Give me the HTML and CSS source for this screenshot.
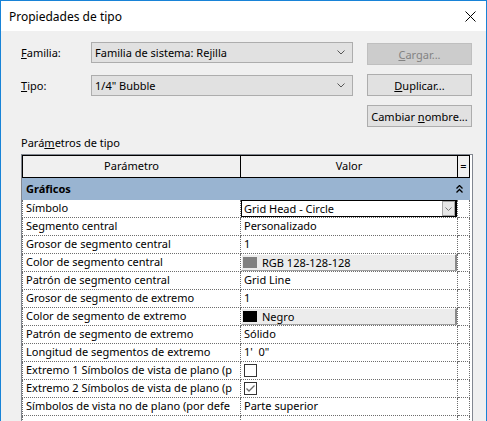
FILE: index.html
```html
<!DOCTYPE html>
<html lang="es">
<head>
  <meta charset="UTF-8" />
  <title>Propiedades de tipo</title>
  <link rel="stylesheet" href="styles.css">
</head>
<body>
  <div class="window">
    <div class="titlebar">
      <span>Propiedades de tipo</span>
      <svg class="close" width="11" height="11" viewBox="0 0 11 11">
        <path d="M0.5 0.5 L10.5 10.5 M10.5 0.5 L0.5 10.5" stroke="#000" stroke-width="1" fill="none"/>
      </svg>
    </div>

    <div class="content">
      <div class="top">
        <div class="fields">
          <div class="field">
            <label><u>F</u>amilia:</label>
            <div class="combo">
              <span>Familia de sistema: Rejilla</span>
              <svg width="8" height="5" viewBox="0 0 8 5"><path d="M0.5 0.5 L4 4 L7.5 0.5" stroke="#555" fill="none"/></svg>
            </div>
          </div>
          <div class="field">
            <label><u>T</u>ipo:</label>
            <div class="combo">
              <span>1/4" Bubble</span>
              <svg width="8" height="5" viewBox="0 0 8 5"><path d="M0.5 0.5 L4 4 L7.5 0.5" stroke="#555" fill="none"/></svg>
            </div>
          </div>
        </div>
        <div class="buttons">
          <button class="btn disabled"><u>C</u>argar...</button>
          <button class="btn"><u>D</u>uplicar...</button>
          <button class="btn">Cambiar <u>n</u>ombre...</button>
        </div>
      </div>

      <div class="section-label">Pará<u>m</u>etros de tipo</div>

      <div class="grid">
        <div class="row head">
          <div class="cell">Parámetro</div>
          <div class="cell">Valor</div>
          <div class="cell">=</div>
        </div>
        <div class="group">
          <span>Gráficos</span>
          <svg width="7" height="8" viewBox="0 0 7 8"><path d="M0.5 3.5 L3.5 0.5 L6.5 3.5 M0.5 7.5 L3.5 4.5 L6.5 7.5" stroke="#000" stroke-width="1.3" fill="none"/></svg>
        </div>

        <div class="row">
          <div class="cell">Símbolo</div>
          <div class="cell editor-cell">
            <div class="editor">
              <span>Grid Head - Circle</span>
              <div class="drop"><svg width="7" height="4" viewBox="0 0 7 4"><path d="M0.5 0.5 L3.5 3.5 L6.5 0.5" stroke="#777" fill="none"/></svg></div>
            </div>
          </div>
          <div class="cell"></div>
        </div>
        <div class="row">
          <div class="cell">Segmento central</div>
          <div class="cell">Personalizado</div>
          <div class="cell"></div>
        </div>
        <div class="row">
          <div class="cell">Grosor de segmento central</div>
          <div class="cell">1</div>
          <div class="cell"></div>
        </div>
        <div class="row">
          <div class="cell">Color de segmento central</div>
          <div class="cell editor-cell">
            <div class="color-btn"><span class="swatch gray"></span>RGB 128-128-128</div>
          </div>
          <div class="cell"></div>
        </div>
        <div class="row">
          <div class="cell">Patrón de segmento central</div>
          <div class="cell">Grid Line</div>
          <div class="cell"></div>
        </div>
        <div class="row">
          <div class="cell">Grosor de segmento de extremo</div>
          <div class="cell">1</div>
          <div class="cell"></div>
        </div>
        <div class="row">
          <div class="cell">Color de segmento de extremo</div>
          <div class="cell editor-cell">
            <div class="color-btn"><span class="swatch black"></span>Negro</div>
          </div>
          <div class="cell"></div>
        </div>
        <div class="row">
          <div class="cell">Patrón de segmento de extremo</div>
          <div class="cell">Sólido</div>
          <div class="cell"></div>
        </div>
        <div class="row">
          <div class="cell">Longitud de segmentos de extremo</div>
          <div class="cell">1'&nbsp; 0"</div>
          <div class="cell"></div>
        </div>
        <div class="row">
          <div class="cell">Extremo 1 Símbolos de vista de plano (p</div>
          <div class="cell"><span class="check"></span></div>
          <div class="cell"></div>
        </div>
        <div class="row">
          <div class="cell">Extremo 2 Símbolos de vista de plano (p</div>
          <div class="cell">
            <span class="check">
              <svg width="11" height="11" viewBox="0 0 11 11"><path d="M1.5 5.5 L4 8 L9.5 2.5" stroke="#6b6b6b" stroke-width="1.3" fill="none"/></svg>
            </span>
          </div>
          <div class="cell"></div>
        </div>
        <div class="row">
          <div class="cell">Símbolos de vista no de plano (por defe</div>
          <div class="cell">Parte superior</div>
          <div class="cell"></div>
        </div>
        <div class="row">
          <div class="cell"></div>
          <div class="cell"></div>
          <div class="cell"></div>
        </div>
      </div>
    </div>
  </div>
</body>
</html>
```

FILE: styles.css
```css
body {
  margin: 0;
  padding: 0;
  overflow: hidden;
  font-family: "Noto Sans", "Liberation Sans", sans-serif;
  font-size: 11px;
  color: #000;
  background: #f0f0f0;
}

.window {
  width: 487px;
  height: 421px;
  box-sizing: border-box;
  border: 1px solid #1883d7;
  border-bottom: none;
  background: #f0f0f0;
  display: flex;
  flex-direction: column;
  overflow: hidden;
}

.titlebar {
  height: 30px;
  flex: none;
  background: #fff;
  display: flex;
  align-items: center;
  justify-content: space-between;
  padding: 0 10px 0 8px;
  font-size: 12px;
}

.content {
  flex: 1;
  display: flex;
  flex-direction: column;
  padding: 11px 13px 0 20px;
  min-height: 0;
}

.top {
  display: flex;
  gap: 14px;
}

.fields {
  width: 332px;
  display: flex;
  flex-direction: column;
  gap: 12px;
}

.field {
  display: flex;
  align-items: center;
}

.field label {
  width: 70px;
}

.combo {
  width: 262px;
  height: 21px;
  box-sizing: border-box;
  background: #e1e1e1;
  border: 1px solid #adadad;
  display: flex;
  align-items: center;
  justify-content: space-between;
  padding: 0 7px 0 3px;
}

.buttons {
  width: 105px;
  display: flex;
  flex-direction: column;
  gap: 9px;
  padding-top: 1px;
}

.btn {
  height: 22px;
  font-family: inherit;
  font-size: 11px;
  background: #e1e1e1;
  border: 1px solid #adadad;
  color: #000;
  padding: 0;
}

.btn.disabled {
  background: #cccccc;
  border-color: #bfbfbf;
  color: #838383;
}

.section-label {
  margin: 9px 0 4px 0;
  height: 14px;
  line-height: 14px;
}

.grid {
  flex: 1;
  background: #fff;
  border: 1px solid #828790;
  border-bottom: none;
}

.row {
  display: grid;
  grid-template-columns: 219px 217px 12px;
  height: 18px;
}

.row .cell {
  box-sizing: border-box;
  border-right: 1px dotted #6d6d6d;
  border-bottom: 1px dotted #6d6d6d;
  padding-left: 3px;
  line-height: 16px;
  white-space: nowrap;
  overflow: hidden;
}

.row .cell:first-child {
  border-left: 1px dotted #6d6d6d;
}

.row.head {
  height: 23px;
}

.row.head .cell {
  border: 1px solid #000;
  border-left: none;
  background: #f0f0f0;
  text-align: center;
  line-height: 20px;
  padding: 0;
}

.row.head .cell:first-child {
  border-left: 1px solid #000;
}

.group {
  width: 448px;
  height: 22px;
  box-sizing: border-box;
  background: #99b4d1;
  font-weight: bold;
  display: flex;
  align-items: center;
  justify-content: space-between;
  padding: 0 7px 1px 4px;
}

.row .editor-cell {
  padding: 0;
}

.editor {
  height: 17px;
  box-sizing: border-box;
  border: 1px solid #000;
  border-right-width: 2px;
  display: flex;
  align-items: center;
  justify-content: space-between;
  padding-left: 2px;
  line-height: 14px;
}

.drop {
  width: 13px;
  height: 15px;
  box-sizing: border-box;
  background: #e6e6e6;
  border: 1px solid #a5a5a5;
  display: flex;
  align-items: center;
  justify-content: center;
}

.color-btn {
  height: 17px;
  box-sizing: border-box;
  background: #ececec;
  border-top: 1px solid #fff;
  border-left: 1px solid #fff;
  border-right: 2px solid #8a8a8a;
  border-bottom: 1px solid #a0a0a0;
  display: flex;
  align-items: center;
  gap: 5px;
  padding-left: 1px;
  line-height: 14px;
}

.swatch {
  width: 14px;
  height: 11px;
}

.swatch.gray {
  background: #808080;
}

.swatch.black {
  background: #000;
}

.check {
  display: inline-flex;
  align-items: center;
  justify-content: center;
  width: 13px;
  height: 13px;
  box-sizing: border-box;
  border: 1px solid #333;
  background: #fff;
  vertical-align: middle;
  margin-top: -2px;
}
```
